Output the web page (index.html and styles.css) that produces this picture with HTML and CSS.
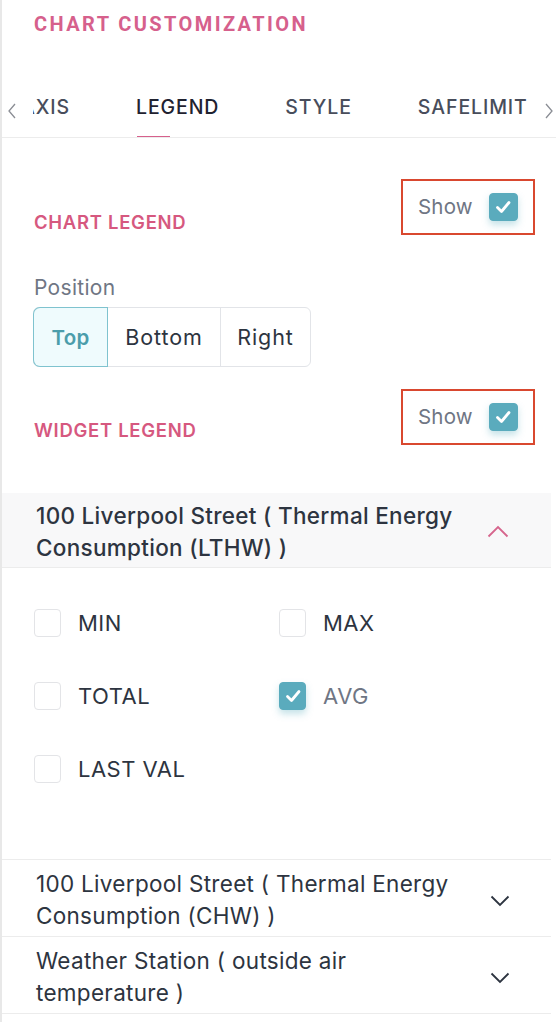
FILE: index.html
```html
<!DOCTYPE html>
<html>
<head>
<meta charset="utf-8">
<link rel="stylesheet" href="styles.css">
</head>
<body>
<div class="panel">
  <h1 class="title">CHART CUSTOMIZATION</h1>
  <div class="tabs">
    <span class="arrow left"><svg width="10" height="16" viewBox="0 0 10 16"><polyline points="8,1 2,8 8,15" fill="none" stroke="#8a8d94" stroke-width="1.3"/></svg></span>
    <div class="tab-list">
      <div class="tab-track">
        <span class="tab">AXIS</span>
        <span class="tab active">LEGEND</span>
        <span class="tab">STYLE</span>
        <span class="tab">SAFELIMIT</span>
      </div>
    </div>
    <span class="arrow right"><svg width="10" height="16" viewBox="0 0 10 16"><polyline points="2,1 8,8 2,15" fill="none" stroke="#8a8d94" stroke-width="1.3"/></svg></span>
  </div>

  <div class="section-head first">
    <span class="section-title">CHART LEGEND</span>
    <div class="show-box">
      <span class="show">Show</span>
      <span class="cb checked"><svg viewBox="0 0 28 28" width="28" height="28"><polyline points="8.5,14.5 12.5,18.5 20,9.5" fill="none" stroke="#fff" stroke-width="2.8" stroke-linecap="round" stroke-linejoin="round"/></svg></span>
    </div>
  </div>

  <div class="position">
    <div class="label">Position</div>
    <div class="seg">
      <span class="seg-btn on">Top</span>
      <span class="seg-btn">Bottom</span>
      <span class="seg-btn">Right</span>
    </div>
  </div>

  <div class="section-head second">
    <span class="section-title">WIDGET LEGEND</span>
    <div class="show-box">
      <span class="show">Show</span>
      <span class="cb checked"><svg viewBox="0 0 28 28" width="28" height="28"><polyline points="8.5,14.5 12.5,18.5 20,9.5" fill="none" stroke="#fff" stroke-width="2.8" stroke-linecap="round" stroke-linejoin="round"/></svg></span>
    </div>
  </div>

  <div class="acc open">
    <div class="acc-head">
      <span class="acc-text">100 Liverpool Street ( Thermal Energy Consumption (LTHW) )</span>
      <svg class="chev" width="22" height="13" viewBox="0 0 22 13"><polyline points="1.5,11.5 11,2 20.5,11.5" fill="none" stroke="#d6658d" stroke-width="1.8"/></svg>
    </div>
    <div class="acc-body">
      <label class="opt"><span class="cb"></span><span class="opt-text">MIN</span></label>
      <label class="opt"><span class="cb"></span><span class="opt-text">MAX</span></label>
      <label class="opt"><span class="cb"></span><span class="opt-text">TOTAL</span></label>
      <label class="opt"><span class="cb checked"><svg viewBox="0 0 28 28" width="28" height="28"><polyline points="8.5,14.5 12.5,18.5 20,9.5" fill="none" stroke="#fff" stroke-width="2.8" stroke-linecap="round" stroke-linejoin="round"/></svg></span><span class="opt-text muted">AVG</span></label>
      <label class="opt"><span class="cb"></span><span class="opt-text">LAST VAL</span></label>
    </div>
  </div>

  <div class="acc">
    <div class="acc-head">
      <span class="acc-text">100 Liverpool Street ( Thermal Energy Consumption (CHW) )</span>
      <svg class="chev" width="22" height="13" viewBox="0 0 22 13"><polyline points="2.5,2.5 11,11 19.5,2.5" fill="none" stroke="#2d3440" stroke-width="1.8"/></svg>
    </div>
  </div>
  <div class="acc">
    <div class="acc-head">
      <span class="acc-text">Weather Station ( outside air temperature )</span>
      <svg class="chev" width="22" height="13" viewBox="0 0 22 13"><polyline points="2.5,2.5 11,11 19.5,2.5" fill="none" stroke="#2d3440" stroke-width="1.8"/></svg>
    </div>
  </div>
</div>
</body>
</html>
```
FILE: styles.css
```css
* { box-sizing: border-box; }
html, body { margin: 0; padding: 0; background: #fff; }
body { font-family: Inter, "Noto Sans", sans-serif; color: #2d3440; }

.panel {
  width: 556px;
  min-height: 1022px;
  border-left: 2px solid #e8e8e8;
  overflow: hidden;
}

.title {
  margin: 0;
  padding: 12px 0 0 32px;
  font-family: Roboto, sans-serif;
  font-weight: 700;
  font-size: 20px;
  letter-spacing: 2.4px;
  color: #d6608c;
  line-height: 24px;
}

/* tabs: top 82, bottom border at 137 */
.tabs {
  margin-top: 46px;
  display: flex;
  align-items: center;
  height: 56px;
  border-bottom: 1px solid #ececec;
}
.arrow { display: flex; align-items: center; justify-content: center; flex: none; }
.arrow.left { width: 14px; margin-left: 3px; margin-right: 14px; margin-top: 2px; }
.arrow.right { width: 10px; margin-left: auto; margin-right: 2px; margin-top: 2px; }
.tab-list { flex: none; width: 500px; height: 100%; overflow: hidden; }
.tab-track { display: flex; gap: 66px; margin-left: -12px; height: 100%; }
.tab {
  position: relative;
  height: 100%;
  padding-top: 13px;
  font-size: 19.5px;
  font-weight: 500;
  line-height: 24px;
  color: #484d5b;
  letter-spacing: 0.9px;
  white-space: nowrap;
}
.tab.active { color: #1f2230; }
.tab.active::after {
  content: "";
  position: absolute;
  left: 1px;
  top: 54px;
  width: 33px;
  height: 3px;
  background: #d6608c;
}

.section-head {
  display: flex;
  align-items: flex-start;
  justify-content: space-between;
  padding-left: 32px;
  padding-right: 21px;
}
.section-head.first { margin-top: 41px; }
.section-head.second { margin-top: 22px; }
.section-title {
  font-size: 18.5px;
  line-height: 24px;
  font-weight: 600;
  color: #d6587f;
  letter-spacing: 0.7px;
}
.first .section-title { margin-top: 31px; }
.second .section-title { margin-top: 29px; }
.show-box {
  width: 134px;
  height: 56px;
  border: 2px solid #d9482f;
  display: flex;
  align-items: center;
  padding-left: 15px;
  gap: 16px;
}
.show { font-size: 20.5px; color: #6f7684; letter-spacing: 0.2px; margin-top: -1px; }

.cb {
  width: 27px;
  height: 28px;
  border: 1.5px solid #e3e4e7;
  border-radius: 4px;
  background: #fff;
  display: inline-flex;
  align-items: center;
  justify-content: center;
  flex: none;
}
.cb.checked {
  background: #5aabbd;
  border-color: #5aabbd;
  box-shadow: 0 4px 7px rgba(90, 171, 189, 0.35);
}
.cb svg { display: block; flex: none; }
.show-box .cb { width: 29px; margin-top: -1px; }

.position { padding-left: 31px; margin-top: 40px; }
.label { font-size: 21px; color: #6f7684; line-height: 26px; padding-left: 1px; letter-spacing: 0.3px; }
.seg {
  margin-top: 6px;
  display: inline-flex;
  border: 1px solid #e2e4e8;
  border-radius: 6px;
  height: 60px;
}
.seg-btn {
  display: flex;
  align-items: center;
  justify-content: center;
  font-size: 21.5px;
  color: #2d3440;
  letter-spacing: 0.9px;
  border-left: 1px solid #e2e4e8;
}
.seg-btn:nth-child(1) { width: 73px; border-left: none; }
.seg-btn:nth-child(2) { width: 113px; }
.seg-btn:nth-child(3) { width: 90px; }
.seg-btn.on {
  background: #effbfd;
  color: #4b9dab;
  font-weight: 600;
  font-size: 20.5px;
  letter-spacing: 0.2px;
  box-shadow: 0 0 0 1px #7fc3cf;
  border-radius: 6px 0 0 6px;
  position: relative;
}

.acc { border-bottom: 1px solid #ececec; margin-right: 5px; }
.acc.open { margin-top: 48px; }
.acc-head {
  display: flex;
  align-items: center;
  justify-content: space-between;
  padding: 8px 40px 4px 34px;
}
.acc.open .acc-head {
  background: #f8f8f9;
  border-bottom: 1px solid #ececec;
  height: 75px;
  padding-top: 7px;
  padding-right: 42px;
}
.acc-text {
  font-size: 22.5px;
  line-height: 32px;
  color: #2d3440;
  letter-spacing: 0.3px;
  width: 440px;
}
.acc.open .acc-text { font-weight: 500; }
.chev { flex: none; }

.acc-body {
  display: grid;
  grid-template-columns: 245px 1fr;
  row-gap: 45px;
  padding: 41px 0 76px 32px;
}
.opt { display: flex; align-items: center; gap: 17px; }
.opt-text { font-size: 22px; color: #2d3440; letter-spacing: 0.5px; }
.opt-text.muted { color: #6f7684; }
```
